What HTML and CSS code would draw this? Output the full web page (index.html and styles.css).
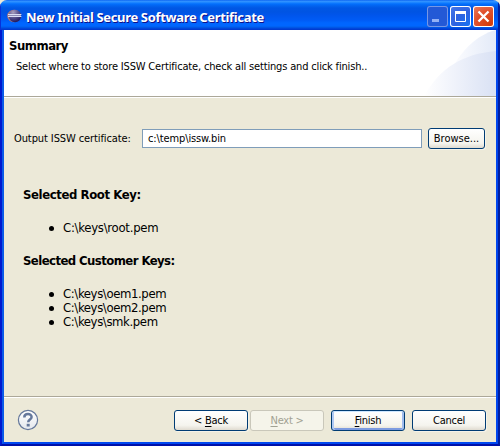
FILE: index.html
```html
<!DOCTYPE html>
<html lang="en">
<head>
<meta charset="utf-8">
<title>New Initial Secure Software Certificate</title>
<link rel="stylesheet" href="styles.css">
</head>
<body>
<div class="window">
  <div class="titlebar">
    <svg class="logo" width="16" height="16" viewBox="0 0 16 16">
      <defs><radialGradient id="orb" cx=".35" cy=".2" r=".8"><stop offset="0" stop-color="#aaa0bd"/><stop offset=".45" stop-color="#655f98"/><stop offset="1" stop-color="#211a60"/></radialGradient></defs>
      <ellipse cx="7" cy="8" rx="6.8" ry="6.2" fill="#a9797f"/>
      <circle cx="8" cy="8" r="6.2" fill="url(#orb)"/>
      <path d="M1 6.500H14.400M1 8.500H14.400" stroke="#d9dcf3"/>
      <path d="M2 7.500H14" stroke="#8d8ab4"/>
    </svg>
    <span class="caption">New Initial Secure Software Certificate</span>
    <div class="controls">
      <span class="ctl dim"><svg width="21" height="21"><path d="M5 14.500H12" stroke="#93b0f5" stroke-width="3"/></svg></span>
      <span class="ctl"><svg width="21" height="21"><path d="M5.500 5.500H15.500V15.500H5.500Z" fill="none" stroke="#fff"/><path d="M5 6.500H16" stroke="#fff" stroke-width="3"/></svg></span>
      <span class="ctl close"><svg width="21" height="21"><path d="M5.500 5.500L15.500 15.500M15.500 5.500L5.500 15.500" stroke="#fff" stroke-width="2.300"/></svg></span>
    </div>
  </div>
  <div class="frame">
    <div class="inner">
      <div class="header">
        <svg class="swoosh" width="76" height="66" viewBox="0 0 76 66">
          <defs>
            <linearGradient id="s1"><stop offset="0" stop-color="#fff"/><stop offset=".3" stop-color="#fafbfe"/><stop offset="1" stop-color="#e3eaf8"/></linearGradient>
            <linearGradient id="s2"><stop offset="0" stop-color="#fff"/><stop offset=".3" stop-color="#f4f6fc"/><stop offset="1" stop-color="#d9e1f4"/></linearGradient>
          </defs>
          <path d="M76 0C56 5 42 21 32 38L20 66H76Z" fill="url(#s1)"/>
          <path d="M76 21C42 24 20 38 4 66H76Z" fill="url(#s2)"/>
        </svg>
        <h1 class="heading">Summary</h1>
        <p class="desc">Select where to store ISSW Certificate, check all settings and click finish..</p>
      </div>
      <div class="content">
        <div class="row">
          <div class="label">Output ISSW certificate:</div>
          <div class="field">c:\temp\issw.bin</div>
          <div class="btn browse">Browse...</div>
        </div>
        <div class="keys">
          <h2>Selected Root Key:</h2>
          <ul><li class="k-root">C:\keys\root.pem</li></ul>
          <h2 class="cust">Selected Customer Keys:</h2>
          <ul><li>C:\keys\oem1.pem</li><li>C:\keys\oem2.pem</li><li>C:\keys\smk.pem</li></ul>
        </div>
      </div>
      <div class="footer">
        <svg class="help" width="22" height="22" viewBox="0 0 22 22">
          <defs><linearGradient id="hg" x2="0" y2="1"><stop offset="0" stop-color="#fff"/><stop offset="1" stop-color="#e4e7ec"/></linearGradient></defs>
          <circle cx="11" cy="11" r="9.600" fill="url(#hg)" stroke="#65789b" stroke-width="1.200"/>
          <path d="M7.300 8.400C7.300 4 14.600 4.100 14.600 8C14.600 10.600 11.200 10.500 11.200 13.300" fill="none" stroke="#65789b" stroke-width="2.500"/>
          <rect x="9.700" y="14.800" width="3" height="2.700" fill="#65789b"/>
        </svg>
        <div class="btn back"><span>&lt; <u>B</u>ack</span></div>
        <div class="btn next"><span><u>N</u>ext &gt;</span></div>
        <div class="btn finish"><span><u>F</u>inish</span></div>
        <div class="btn cancel"><span>Cancel</span></div>
      </div>
    </div>
  </div>
</div>
</body>
</html>
```
FILE: styles.css
```css
* { box-sizing: border-box; }
body { margin: 0; background: #ece9d8; font: 11px/14px "DejaVu Sans Condensed", "DejaVu Sans", sans-serif; font-stretch: condensed; color: #000; }
.window { width: 500px; height: 446px; display: flex; flex-direction: column; border-radius: 7px 7px 0 0; overflow: hidden; }
.frame { flex: 1; display: flex; border: 2px solid; border-width: 0 2px 2px; border-color: #0019cf #001ea0 #0010a8 #0019cf; }
.inner { flex: 1; display: flex; flex-direction: column; border: 2px solid; border-width: 0 2px 2px; border-color: #0855dd #0046ee #0048f0 #0a5ae8; background: #ece9d8; }
.titlebar { height: 30px; padding: 0 6px; display: flex; align-items: center; flex: none; background: linear-gradient(#0058ee 0, #3593ff 1px, #288eff 2px, #127dff 3px, #036ffc 4px, #0262ee 6px, #0057e5 8px, #0054e3 12px, #0055eb 15px, #005bf5 20px, #0066ff 23px, #0066ff 26px, #005eea 27px, #003dd7 29px, #0039c8 30px); box-shadow: inset 1px 0 #0831d9, inset -2px 0 #001ea0; }
.logo { display: block; margin: 2px 0 0 1px; flex: none; }
.caption { font: bold 13px/18px "Noto Sans", "Open Sans", sans-serif; font-stretch: normal; color: #fff; text-shadow: 1px 1px #0f1089; margin: 4px 0 0 3px; white-space: nowrap; letter-spacing: -.34px; }
.controls { display: flex; gap: 2px; margin: 3px 0 0 auto; }
.ctl { display: block; width: 21px; height: 21px; border-radius: 3px; box-shadow: inset 0 0 0 1px #fff; background: radial-gradient(circle at 85% 90%, #1a70f0 0, #2e62e0 50%, #4a7ae8 100%); }
.ctl svg { display: block; }
.dim { background: #2359d6; box-shadow: inset 0 0 0 1px #7797e5; }
.close { background: radial-gradient(circle at 80% 90%, #d43c0a 0, #e0502c 55%, #eb8163 100%); box-shadow: inset 0 0 0 1px #fff; }
.header { position: relative; height: 68px; padding: 9px 0 0 5px; flex: none; background: #fff; border-bottom: 1px solid #fff; box-shadow: inset 0 -1px #aca899; }
.swoosh { position: absolute; right: 0; top: 0; }
.heading { margin: 0; font: bold 13px/14px "DejaVu Sans Condensed", "DejaVu Sans", sans-serif; font-stretch: condensed; letter-spacing: -.5px; }
.desc { position: relative; margin: 7px 0 0 7px; white-space: nowrap; letter-spacing: -.165px; }
.content { flex: 1; padding: 29px 11px 0 10px; }
.row { display: flex; align-items: center; height: 22px; }
.label { width: 128px; white-space: nowrap; letter-spacing: -.1px; padding-top: 1px; }
.field { width: 280px; height: 19px; border: 1px solid #7f9db9; background: #fff; padding: 2px 0 0 5px; letter-spacing: -.12px; }
.btn { display: flex; align-items: center; justify-content: center; width: 74px; height: 21px; border: 1px solid #003c74; border-radius: 3px; background: linear-gradient(#fff, #f5f4ee 75%, #e0dbd0); box-shadow: 1px 1px #f5f3e9; white-space: nowrap; letter-spacing: -.25px; padding-top: 1px; }
.browse { width: 57px; margin-left: 6px; letter-spacing: 0; }
.keys { padding: 39px 0 0 9px; font-size: 13px; }
.keys h2 { margin: 0; font-size: 13px; line-height: 14px; height: 14px; white-space: nowrap; letter-spacing: -.4px; }
.keys .cust { letter-spacing: -.57px; }
.keys ul { margin: 19px 0; padding: 0; list-style: none; }
.keys li { display: flex; align-items: center; height: 14px; white-space: nowrap; letter-spacing: -.39px; }
.keys .k-root { letter-spacing: -.27px; }
.keys li::before { content: ""; width: 5px; height: 5px; border-radius: 50%; background: #000; margin: 1px 9px 0 26px; }
.footer { flex: none; height: 46px; display: flex; align-items: flex-start; padding: 13px 10px 0 13px; border-top: 1px solid #aca899; box-shadow: inset 0 1px #fff; }
.help { display: block; margin-top: -1px; }
.back { margin-left: 135px; }
.next { margin-left: 2px; border-color: #c9c7ba; background: #f5f4ea; color: #a1a192; box-shadow: none; }
.finish { margin-left: 7px; box-shadow: inset 0 1px #cee7ff, inset 2px 0 #b0c9f3, inset -2px 0 #a0bced, inset 0 -2px #7d9be0; }
.cancel { margin-left: 7px; }
u { text-decoration: underline; text-underline-offset: 2px; text-decoration-thickness: 1px; }
```
